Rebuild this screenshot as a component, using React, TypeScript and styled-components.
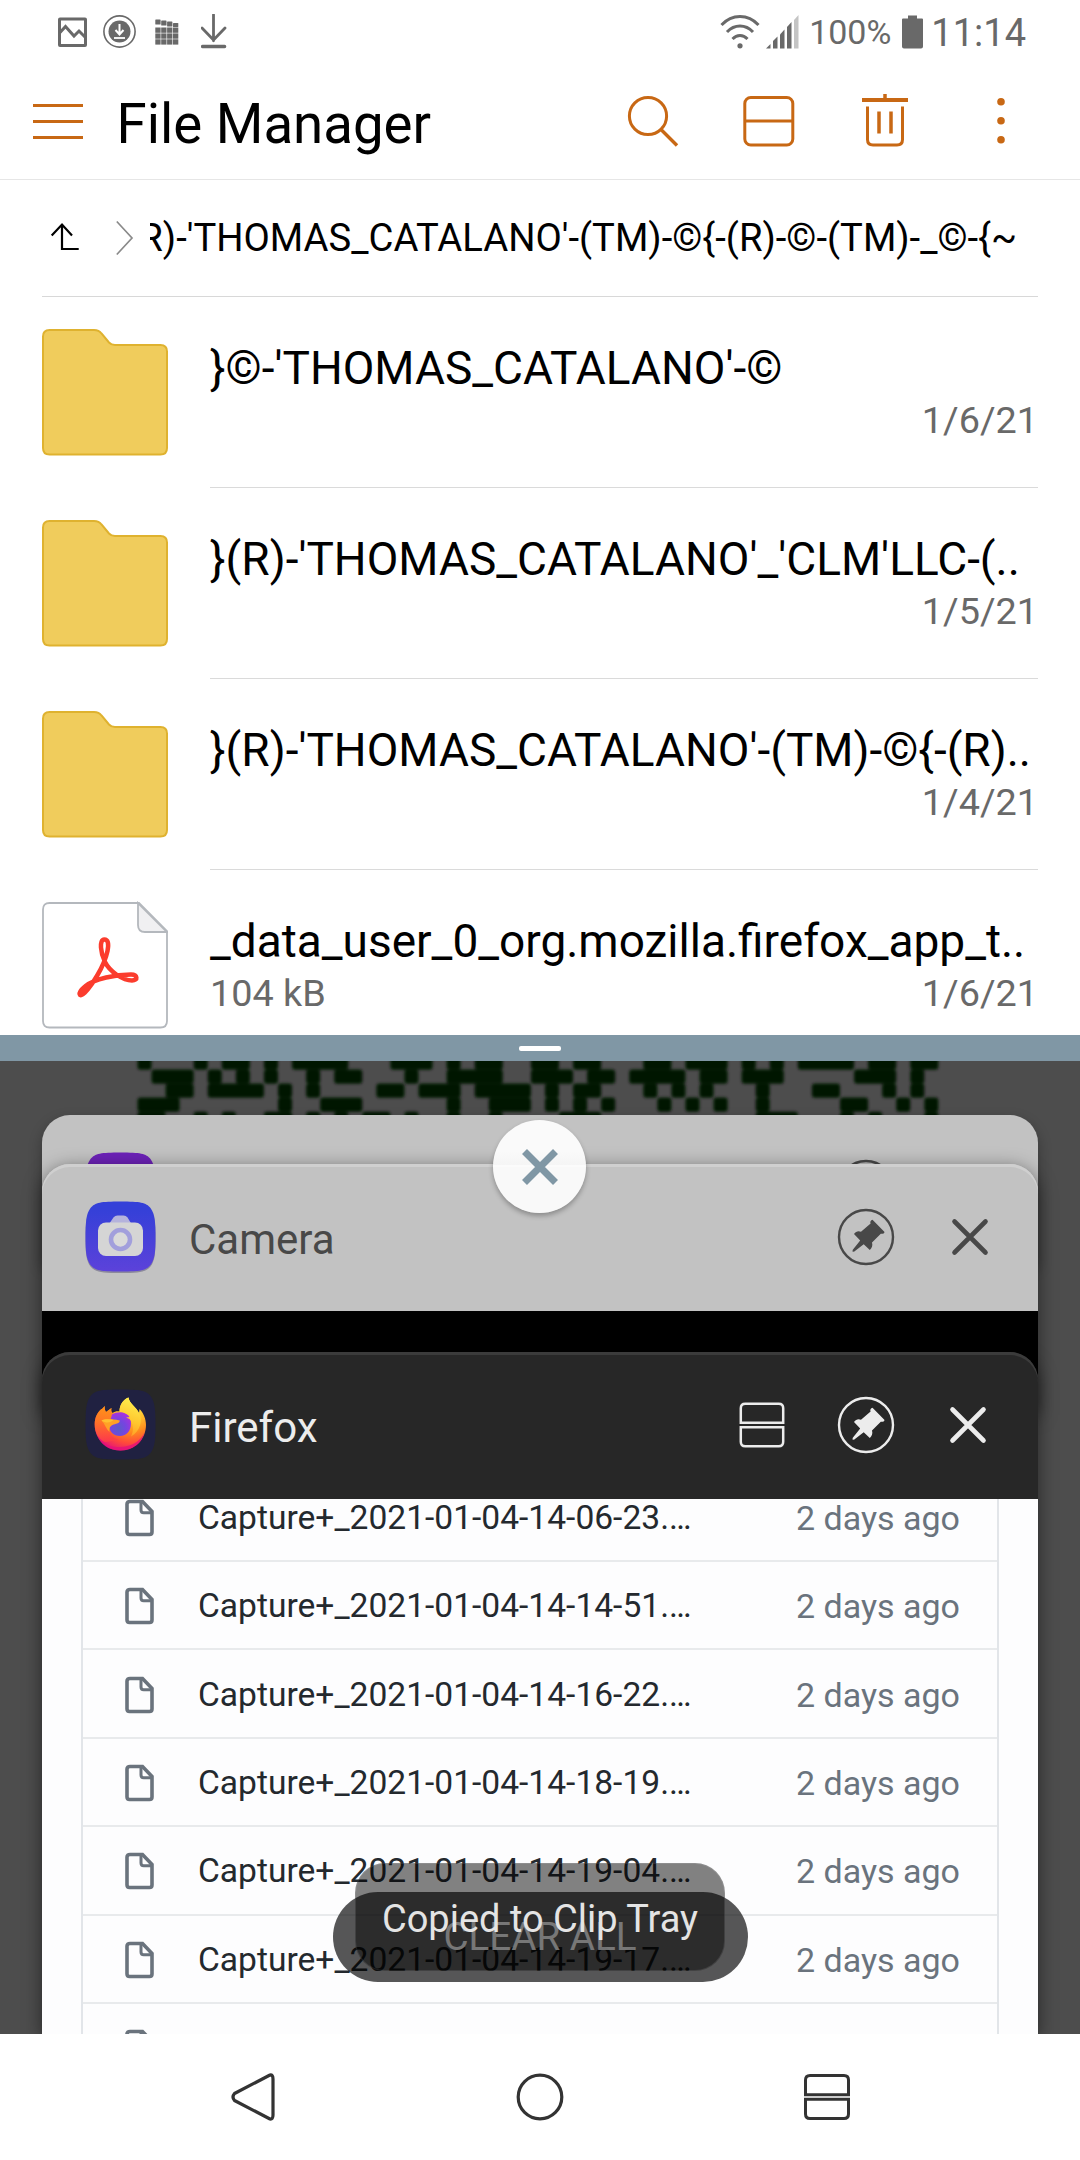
import React from "react";
import styled, { createGlobalStyle } from "styled-components";

const GlobalStyle = createGlobalStyle`
  *, *::before, *::after { box-sizing: border-box; }
  body {
    margin: 0;
    background: #fff;
    font-family: Roboto, "Noto Sans", "Liberation Sans", sans-serif;
  }
  svg { display: block; flex: none; }
`;

const ACCENT = "#c86814";
const GREY = "#696969";
const SLATE = "#8097a5";

/* ---------- layout parts ---------- */

const Screen = styled.div`
  display: flex;
  flex-direction: column;
  width: 1080px;
  height: 2160px;
  overflow: hidden;
  background: #fff;
`;

const UpperPane = styled.section`
  display: flex;
  flex-direction: column;
  height: 1035px;
  flex: none;
  overflow: hidden;
`;

const StatusBar = styled.header`
  display: flex;
  align-items: center;
  justify-content: space-between;
  height: 64px;
  flex: none;
  padding: 0 54px 0 56px;
  color: ${GREY};
`;

const StatusGroup = styled.div<{ $gap: number }>`
  display: flex;
  align-items: center;
  gap: ${(p) => p.$gap}px;
`;

const StatusText = styled.span<{ $size: number; $drop?: number }>`
  font-size: ${(p) => p.$size}px;
  line-height: 40px;
  padding-top: ${(p) => p.$drop ?? 0}px;
  white-space: nowrap;
`;

const Toolbar = styled.nav`
  display: flex;
  align-items: center;
  height: 116px;
  flex: none;
  padding: 0 69px 0 33px;
  border-bottom: 1px solid #e6e6e6;
`;

const Title = styled.h1`
  flex: 1;
  margin: 0;
  padding: 5px 0 0 33.5px;
  font-size: 54.6px;
  font-weight: 400;
  line-height: 64px;
  color: #000;
`;

const ToolbarActions = styled.div`
  display: flex;
  align-items: center;
  gap: 60px;
  margin-right: 78px;
`;

const Breadcrumb = styled.div`
  display: flex;
  align-items: center;
  height: 117px;
  flex: none;
  margin: 0 42px;
  padding-left: 8px;
  border-bottom: 1px solid #d8d8d8;
`;

const CrumbSeparator = styled.div`
  margin: 0 16px 0 36px;
`;

const CrumbPath = styled.div`
  display: flex;
  justify-content: flex-end;
  width: 867px;
  overflow: hidden;
  white-space: nowrap;
  font-size: 38.25px;
  line-height: 50px;
  color: #000;
`;

const FileItem = styled.article`
  display: flex;
  gap: 42px;
  height: 191px;
  flex: none;
  padding: 0 42px;
`;

const FileIconSlot = styled.div`
  width: 126px;
  padding-top: 31px;
`;

const FileInfo = styled.div`
  flex: 1;
  padding-top: 44px;
  border-bottom: 1px solid #dadada;
`;

const FileName = styled.div`
  font-size: 46px;
  line-height: 54px;
  color: #000;
  white-space: nowrap;
`;

const FileMeta = styled.div`
  display: flex;
  justify-content: space-between;
  font-size: 37.8px;
  line-height: 50px;
  color: ${GREY};
`;

const SplitDivider = styled.div`
  display: flex;
  justify-content: center;
  align-items: center;
  height: 26px;
  flex: none;
  background: ${SLATE};
`;

const DividerGrip = styled.div`
  width: 42px;
  height: 5px;
  border-radius: 2px;
  background: #fff;
`;

const LowerPane = styled.section`
  position: relative;
  height: 973px;
  flex: none;
  overflow: hidden;
  background: #4d4d4d;
`;

const Backdrop = styled.div`
  position: absolute;
  inset: 0;
`;

const CardStack = styled.div`
  display: flex;
  flex-direction: column;
  height: 100%;
  padding: 54px 42px 0;
`;

const Card = styled.article<{ $height: number; $overlap: number; $first?: boolean }>`
  position: relative;
  height: ${(p) => p.$height}px;
  flex: none;
  margin-bottom: -${(p) => p.$overlap}px;
  border-radius: 28px 28px 0 0;
  box-shadow: ${(p) =>
    p.$first ? "0 6px 14px rgba(0,0,0,.3)" : "0 4px 18px rgba(0,0,0,.5)"};
`;

const CardHeader = styled.header<{ $dark?: boolean; $edge?: boolean; $right: number }>`
  display: flex;
  align-items: center;
  height: 147px;
  padding: 0 ${(p) => p.$right}px 1px 43px;
  border-radius: 28px 28px 0 0;
  background: ${(p) => (p.$dark ? "#272727" : "#c2c2c2")};
  color: ${(p) => (p.$dark ? "#ececec" : "#484848")};
  box-shadow: ${(p) =>
    p.$edge ? `inset 0 3px 0 ${p.$dark ? "#3b3b3b" : "#cfcfcf"}` : "none"};
`;

const CardTitle = styled.h2`
  flex: 1;
  margin: 0;
  padding: 6px 0 0 33px;
  font-size: 42px;
  font-weight: 400;
  line-height: 50px;
`;

const CardActions = styled.div<{ $gap: number }>`
  display: flex;
  align-items: center;
  gap: ${(p) => p.$gap}px;
`;

const CameraBody = styled.div`
  height: 100px;
  background: #000;
`;

const WebBody = styled.div`
  height: 535px;
  overflow: hidden;
  padding: 0 39px;
  background: #fdfdfe;
`;

const RepoList = styled.div`
  margin-top: -25.4px;
  border: solid #e2e5e9;
  border-width: 0 2px;
`;

const RepoRow = styled.div`
  display: flex;
  align-items: center;
  height: 88.4px;
  padding: 2px 37px 0 42px;
  border-bottom: 2px solid #e8eaec;
  font-size: 34px;
  line-height: 44px;
  white-space: nowrap;
`;

const RepoName = styled.span`
  flex: 1;
  padding-left: 44px;
  font-size: 33.6px;
  color: #24292e;
`;

const RepoAge = styled.span`
  color: #6a737d;
`;

const CloseSplit = styled.button`
  position: absolute;
  left: 493px;
  top: 59px;
  display: flex;
  align-items: center;
  justify-content: center;
  width: 93px;
  height: 93px;
  padding: 0;
  border: 0;
  border-radius: 50%;
  background: linear-gradient(#fafafa 0 34%, #f5f5f5 48%, #fbfbfb 48% 51%, #f9f9f9 51%);
  box-shadow: 0 3px 5px rgba(0, 0, 0, 0.28);
`;

const ClearAll = styled.button`
  position: absolute;
  left: 332.500px;
  top: 831px;
  width: 415px;
  height: 90px;
  padding: 0;
  border: 0;
  border-radius: 45px;
  background: rgba(0, 0, 0, 0.66);
  font-family: inherit;
  font-size: 38.6px;
  line-height: 88px;
  color: rgba(255, 255, 255, 0.88);
`;

const Toast = styled.div`
  position: absolute;
  left: 355px;
  top: 802px;
  width: 370px;
  height: 108px;
  border: 1px solid rgba(255, 255, 255, 0.1);
  border-radius: 30px;
  background: rgba(0, 0, 0, 0.49);
  text-align: center;
  font-size: 38px;
  line-height: 110px;
  color: #e4e4e4;
  white-space: nowrap;
`;

const NavBar = styled.footer`
  display: flex;
  align-items: center;
  justify-content: space-between;
  height: 126px;
  flex: none;
  padding: 0 230px;
  color: #333;
`;

/* ---------- status icons ---------- */

const ImageIcon = () => (
  <svg width="33" height="33" viewBox="0 0 33 33" fill="none" stroke={GREY} strokeWidth="3">
    <rect x="3.5" y="3" width="26" height="26.5" rx="0.5" />
    <path d="M4 16.500l5.500-6 8.500 9.500 5-5 6.500 6.500" />
  </svg>
);

const DownloadBadge = () => (
  <svg width="34" height="34" viewBox="0 0 34 34">
    <circle cx="16.500" cy="16.500" r="15.600" fill="none" stroke={GREY} strokeWidth="1.600" />
    <circle cx="16.500" cy="16.500" r="11" fill={GREY} />
    <path d="M16.500 9v9M12.500 15l4 4.500 4-4.500" fill="none" stroke="#fff" strokeWidth="2" />
    <path d="M11 23h11" stroke="#fff" strokeWidth="1.800" />
  </svg>
);

const GridIcon = () => (
  <svg width="24" height="33" viewBox="0 0 24 33" fill={GREY}>
    {[0, 1, 2, 3].map((c) => (
      <g key={c}>
        <rect x={c * 5.9 + 0.300} y={[3.500, 4.500, 5.500, 7][c]} width="5.300" height={[5, 5, 5, 4][c]} rx="0.600" />
        {[0, 1, 2].map((r) => (
          <rect key={r} x={c * 5.9 + 0.300} y={11.5 + r * 5.900} width="5.300" height="5.300" />
        ))}
      </g>
    ))}
  </svg>
);

const DownloadIcon = () => (
  <svg width="26" height="36" viewBox="0 0 26 36" fill="none" stroke={GREY} strokeLinecap="round">
    <path d="M12.500 0.800v26M1 14L12.500 26l11.500-12" strokeWidth="2.800" />
    <path d="M1.600 32.500h22" strokeWidth="3.400" />
  </svg>
);

const WifiIcon = () => (
  <svg width="40" height="36" viewBox="0 0 40 36" fill="none" stroke={GREY} strokeWidth="3">
    <path d="M1.500 11C12-0.300 28-0.300 38.500 11" />
    <path d="M7 18c7.500-8 18.500-8 26 0" />
    <path d="M12.500 25c4.500-4.700 10.500-4.700 15 0" />
    <circle cx="20" cy="31.800" r="2.600" fill={GREY} stroke="none" />
  </svg>
);

const SignalIcon = () => (
  <svg width="33" height="34" viewBox="0 0 33 34" fill={GREY}>
    <path d="M0 33.500l4.500-4.500v4.500z" />
    <path d="M7 33.500V26l4.500-4.500v12z" />
    <path d="M14 33.500V19.500l4.500-5v19z" />
    <path d="M21 33.500V12l4.500-5v26.500z" />
    <path d="M28 33.500V5l4.500-5v33.500z" fill="#c4c4c4" />
  </svg>
);

const BatteryIcon = () => (
  <svg width="21" height="34" viewBox="0 0 21 34" fill={GREY}>
    <path d="M6 0.500h9v3h5q1 0 1 1v27q0 2-2 2H2q-2 0-2-2v-27q0-1 1-1h5z" />
  </svg>
);

/* ---------- toolbar icons ---------- */

const MenuIcon = () => (
  <svg width="50" height="38" viewBox="0 0 50 38" stroke={ACCENT} strokeWidth="3">
    <path d="M0 2.500h50M0 18.500h50M0 34.500h50" />
  </svg>
);

const SearchIcon = () => (
  <svg width="56" height="56" viewBox="0 0 56 56" fill="none" stroke={ACCENT} strokeWidth="3">
    <circle cx="23" cy="22" r="18.600" />
    <path d="M36 35.500l16 16" strokeWidth="3.400" />
  </svg>
);

const SplitIcon = () => (
  <svg width="56" height="56" viewBox="0 0 56 56" fill="none" stroke={ACCENT} strokeWidth="3">
    <rect x="3.800" y="3.500" width="48" height="47.500" rx="6" />
    <path d="M3.800 27h48" />
  </svg>
);

const TrashIcon = () => (
  <svg width="56" height="56" viewBox="0 0 56 56" fill="none" stroke={ACCENT}>
    <path d="M5 6h46" strokeWidth="4" />
    <path d="M28 0v6" strokeWidth="3.500" />
    <path d="M10.500 12.500V45.500q0 5.500 5.500 5.500h24q5.500 0 5.500-5.500V12.500" strokeWidth="3" />
    <path d="M22 17.500v22M34 17.500v22" strokeWidth="3.500" />
  </svg>
);

const MoreIcon = () => (
  <svg width="20" height="56" viewBox="0 0 20 56" fill={ACCENT}>
    <circle cx="10" cy="7.800" r="3.800" />
    <circle cx="10" cy="26.800" r="3.800" />
    <circle cx="10" cy="45.800" r="3.800" />
  </svg>
);

const UpLevelIcon = () => (
  <svg width="30" height="34" viewBox="0 0 30 34" fill="none" stroke="#000" strokeWidth="2.200">
    <path d="M12 3v25h16.700M1.700 14.500L12 3.500l10 11" />
  </svg>
);

const ChevronIcon = () => (
  <svg width="18" height="36" viewBox="0 0 18 36" fill="none" stroke="#8a8a8a" strokeWidth="1.700">
    <path d="M0.800 1.500L16 18 0.800 34.500" />
  </svg>
);

/* ---------- file icons ---------- */

const FolderIcon = () => (
  <svg width="126" height="128" viewBox="0 0 126 128">
    <path
      d="M7.500 2H52Q57 2 59.500 5.500L67 14.500Q69.300 17 73 17H118.500Q125 17 125 23.500V120Q125 126.500 118.500 126.500H7.500Q1 126.500 1 120V8.500Q1 2 7.500 2Z"
      fill="#f0cc5c"
      stroke="#dfb22f"
      strokeWidth="2"
    />
  </svg>
);

const PdfIcon = () => (
  <svg width="126" height="128" viewBox="0 0 126 128" fill="none">
    <path
      d="M7.500 2H97L125 30V120Q125 126.500 118.500 126.500H7.500Q1 126.500 1 120V8.500Q1 2 7.500 2Z"
      fill="#fff"
      stroke="#b4b8bd"
      strokeWidth="1.800"
    />
    <path d="M96 2V24Q96 31 103 31H125Z" fill="#f0f0f2" stroke="#b4b8bd" strokeWidth="1.800" />
    <path
      d="M62.300 38.500C57 38.500 58.500 52 63 61C68 71 81 79.500 90 79.500C96.500 79.500 95.500 73.500 89 73.500C75 73.500 52 77.500 43 85.500C34.500 92.500 37.500 97 42.500 92C50 84 62 66 65.500 50C67 42.500 66 38.500 62.300 38.500Z"
      stroke="#fb3c2d"
      strokeWidth="4.500"
      strokeLinejoin="round"
    />
  </svg>
);

/* ---------- recents icons ---------- */

const SQUIRCLE =
  "M35.500 0.500C55 0.500 61 1.500 65.500 7C70 13 70.500 22 70.500 35.500C70.500 50 70 58 65.500 64C61 69.500 55 70.500 35.500 70.500C16 70.500 10 69.500 5.500 64C1 58 0.500 50 0.500 35.500C0.500 22 1 13 5.500 7C10 1.500 16 0.500 35.500 0.500Z";

const PurpleAppIcon = () => (
  <svg width="71" height="72" viewBox="0 0 71 72">
    <path d={SQUIRCLE} fill="#6d22b8" />
  </svg>
);

const CameraIcon = () => (
  <svg width="71" height="72" viewBox="0 0 71 72">
    <defs>
      <linearGradient id="cam" x1="0" y1="0" x2="0" y2="1">
        <stop offset="0.100" stopColor="#3440d8" />
        <stop offset="1" stopColor="#5c42da" />
      </linearGradient>
    </defs>
    <path d={SQUIRCLE} transform="translate(0 1.500)" fill="#8c8a9c" />
    <path d={SQUIRCLE} fill="url(#cam)" />
    <path d="M24 23L28.500 16.500Q30 14.500 32.500 14.500H38.500Q41 14.500 42.500 16.500L46.500 23Z" fill="#b5b3dc" />
    <rect x="13" y="21.500" width="45" height="33.500" rx="8" fill="#d5d5d5" />
    <circle cx="35.500" cy="38.500" r="9.500" fill="#dadada" stroke="#a29fdc" strokeWidth="4.600" />
  </svg>
);

const FirefoxIcon = () => (
  <svg width="71" height="72" viewBox="0 0 71 72">
    <defs>
      <radialGradient id="ffBody" cx="0.720" cy="0.120" r="0.950">
        <stop offset="0.050" stopColor="#fff04f" />
        <stop offset="0.320" stopColor="#ffc22e" />
        <stop offset="0.560" stopColor="#ff8a1e" />
        <stop offset="0.780" stopColor="#ff4a3a" />
        <stop offset="1" stopColor="#e4107c" />
      </radialGradient>
      <radialGradient id="ffGlobe" cx="0.420" cy="0.700" r="0.700">
        <stop offset="0" stopColor="#5a5cc8" />
        <stop offset="0.500" stopColor="#7545e0" />
        <stop offset="1" stopColor="#a832dd" />
      </radialGradient>
      <linearGradient id="ffHead" x1="0" y1="0" x2="0.200" y2="1">
        <stop offset="0" stopColor="#ff9a16" />
        <stop offset="0.450" stopColor="#ff7a24" />
        <stop offset="1" stopColor="#ff3f46" />
      </linearGradient>
      <linearGradient id="ffTail" x1="0.600" y1="0" x2="0.400" y2="1">
        <stop offset="0" stopColor="#fff04f" />
        <stop offset="0.600" stopColor="#ffc62e" />
        <stop offset="1" stopColor="#ff9a26" />
      </linearGradient>
    </defs>
    <path d={SQUIRCLE} fill="#202141" />
    <path
      d="M19.700 17C19.600 20 20 21.500 21 23L26.500 19C26 21 26.200 23 27.500 24C30 22.500 32 22 34.500 22.600C34.500 15.500 38.500 10.500 43.500 8.600C44.500 15 51 18 54 24L54.500 20C58.500 24 61 30 61 36C61 50 50 61.500 35.500 61.500C21 61.500 9.700 50 9.700 35.500C9.700 28 13 22 17.500 19.500Z"
      fill="url(#ffBody)"
    />
    <path d="M12.500 47C18 55.500 27 58.500 36 58C48 57.500 56 51 59.500 44C57 54 48 61.500 35.500 61.500C24 61.500 15.500 55.500 12.500 47Z" fill="#e5107a" opacity="0.800" />
    <path
      d="M19.700 17C19.600 20 20 21.500 21 23L26.500 19C26 21 26.200 23 27.500 24L30 29L24 36C23 44 27 49 34 51L20 53C13 50 9.700 43 9.700 35.500C9.700 28 13 22 17.500 19.500Z"
      fill="url(#ffHead)"
      opacity="0.850"
    />
    <path d="M27 25.500C30 23.300 35 22.600 39 23.600C43.500 25 46 29 46 34.500C46 42 41.500 47 35 47C28.500 47 24 42.500 24 36Z" fill="url(#ffGlobe)" />
    <path
      d="M34.500 22.800C34.500 15.500 38.500 10.500 43.500 8.600C44.500 15 51 18 54 24C58 31 55.500 42 46 47.500C49 42 48.500 34 44.500 30L41 28.500L45.500 28C42.500 25 38.500 23.300 34.500 22.800Z"
      fill="url(#ffTail)"
    />
    <path d="M16.500 31.500C20 29.500 26 29.500 34.800 31.500C34.500 35 30.500 34.500 27.500 36C25 37.500 24 39 24.500 43C21 40 20 35 16.500 31.500Z" fill="#ffa126" />
    <path d="M16.500 31.500C20 29.500 24 30 28.500 31C25.500 34 21 34.500 16.500 31.500Z" fill="#ffbf30" />
  </svg>
);

const PinIcon = () => (
  <svg width="58" height="58" viewBox="-29 -29 58 58">
    <circle r="27" fill="none" stroke="currentColor" strokeWidth="2.400" />
    <path
      d="M6.500-17.200L18.300-5.200Q18.800-4 17.600-3.500Q16-3 14.800-3.200L6 5.500C7 8.500 5.700 11.500 3.800 13L-2.300 7.200L-12 14.800L-13.600 14.600L-13.200 12.800L-5.800 3.500L-12-3C-10-5.800-7.500-6.300-5-5.200L4.600-13.500C3.700-15 4.800-16.700 6.500-17.200Z"
      fill="currentColor"
    />
  </svg>
);

const CloseIcon = () => (
  <svg width="40" height="40" viewBox="0 0 40 40" stroke="currentColor" strokeWidth="4.600" strokeLinecap="round">
    <path d="M4.500 4.500l31 31M35.500 4.500l-31 31" />
  </svg>
);

const SplitWindowIcon = ({ weight = 2.5, inset = 1.8 }: { weight?: number; inset?: number }) => {
  const a = inset;
  const b = 46 - inset;
  return (
    <svg width="46" height="46" viewBox="0 0 46 46" fill="none" stroke="currentColor" strokeWidth={weight}>
      <path d={`M${a} 20.800V${a + 4.5}Q${a} ${a} ${a + 4.5} ${a}H${b - 4.5}Q${b} ${a} ${b} ${a + 4.5}V20.800Z`} />
      <path d={`M${a} 25.200V${b - 4.5}Q${a} ${b} ${a + 4.5} ${b}H${b - 4.5}Q${b} ${b} ${b} ${b - 4.5}V25.200Z`} />
    </svg>
  );
};

const DocIcon = () => (
  <svg width="29" height="38" viewBox="0 0 29 38" fill="none" stroke="#6a737d" strokeWidth="3.600">
    <path d="M5 2.500H17.500L27 12.500V33Q27 35.500 24.500 35.500H4.500Q2 35.500 2 33V5Q2 2.500 5 2.500Z" />
    <path d="M16 3V11Q16 13.700 18.700 13.700H27" strokeWidth="3" />
  </svg>
);

/* ---------- dimmed barcode behind the cards ---------- */

const MODULE = 14.05;
const CODE_ROWS: Array<Array<[number, number]>> = [
  [[0, 0], [4, 4], [6, 7], [9, 9], [11, 14], [18, 20], [22, 22], [24, 25], [28, 29], [31, 32], [36, 37], [39, 41], [43, 43], [45, 45], [47, 50], [52, 53], [55, 56]],
  [[1, 3], [5, 5], [7, 7], [9, 9], [12, 12], [14, 15], [19, 19], [22, 25], [28, 30], [32, 33], [35, 38], [40, 41], [43, 45], [51, 53], [55, 55]],
  [[2, 3], [5, 8], [10, 10], [12, 12], [17, 18], [20, 22], [24, 27], [29, 29], [31, 32], [36, 36], [38, 38], [40, 40], [44, 44], [48, 49], [53, 53], [55, 55]],
  [[0, 2], [10, 10], [13, 15], [22, 22], [25, 27], [29, 29], [31, 31], [33, 33], [37, 37], [39, 39], [41, 41], [44, 44], [50, 51], [54, 54], [56, 56]],
  [[0, 1], [4, 4], [6, 6], [9, 10], [12, 12], [14, 14], [16, 17], [19, 19], [22, 22], [25, 25], [30, 32], [44, 46], [50, 50], [52, 52], [56, 56]],
];

const Barcode = () => (
  <svg width="1080" height="120" viewBox="0 0 1080 120">
    <defs>
      <filter id="soft" x="-5%" y="-20%" width="110%" height="140%">
        <feGaussianBlur stdDeviation="1.700" />
      </filter>
    </defs>
    <g fill="#021305" filter="url(#soft)">
      {CODE_ROWS.map((runs, r) =>
        runs.map(([from, to]) => (
          <rect
            key={`${r}-${from}`}
            x={137.500 + from * MODULE}
            y={8.500 + (r - 1) * MODULE}
            width={(to - from + 1) * MODULE}
            height={MODULE + 0.200}
            rx="3"
          />
        ))
      )}
    </g>
  </svg>
);

/* ---------- data ---------- */

type Entry = { kind: "folder" | "pdf"; name: string; size?: string; date: string };

const FILES: Entry[] = [
  { kind: "folder", name: "}©-'THOMAS_CATALANO'-©", date: "1/6/21" },
  { kind: "folder", name: "}(R)-'THOMAS_CATALANO'_'CLM'LLC-(..", date: "1/5/21" },
  { kind: "folder", name: "}(R)-'THOMAS_CATALANO'-(TM)-©{-(R)..", date: "1/4/21" },
  { kind: "pdf", name: "_data_user_0_org.mozilla.firefox_app_t..", size: "104 kB", date: "1/6/21" },
];

const CAPTURES = ["14-06-23", "14-14-51", "14-16-22", "14-18-19", "14-19-04", "14-19-17"];

export default function App() {
  return (
    <>
      <GlobalStyle />
      <Screen>
        <UpperPane>
          <StatusBar>
            <StatusGroup $gap={22}>
              <StatusGroup $gap={18}>
                <StatusGroup $gap={14}>
                  <ImageIcon />
                  <DownloadBadge />
                </StatusGroup>
                <GridIcon />
              </StatusGroup>
              <DownloadIcon />
            </StatusGroup>
            <StatusGroup $gap={8}>
              <StatusGroup $gap={11}>
                <StatusGroup $gap={10}>
                  <StatusGroup $gap={6}>
                    <WifiIcon />
                    <SignalIcon />
                  </StatusGroup>
                  <StatusText $size={34}>100%</StatusText>
                </StatusGroup>
                <BatteryIcon />
              </StatusGroup>
              <StatusText $size={38} $drop={2}>11:14</StatusText>
            </StatusGroup>
          </StatusBar>

          <Toolbar>
            <MenuIcon />
            <Title>File Manager</Title>
            <ToolbarActions>
              <SearchIcon />
              <SplitIcon />
              <TrashIcon />
            </ToolbarActions>
            <MoreIcon />
          </Toolbar>

          <Breadcrumb>
            <UpLevelIcon />
            <CrumbSeparator>
              <ChevronIcon />
            </CrumbSeparator>
            <CrumbPath>
              <span>{"}(R)-'THOMAS_CATALANO'-(TM)-©{-(R)-©-(TM)-_©-{~"}</span>
            </CrumbPath>
          </Breadcrumb>

          {FILES.map((f) => (
            <FileItem key={f.name}>
              <FileIconSlot>{f.kind === "folder" ? <FolderIcon /> : <PdfIcon />}</FileIconSlot>
              <FileInfo>
                <FileName>{f.name}</FileName>
                <FileMeta>
                  <span>{f.size}</span>
                  <span>{f.date}</span>
                </FileMeta>
              </FileInfo>
            </FileItem>
          ))}
        </UpperPane>

        <SplitDivider>
          <DividerGrip />
        </SplitDivider>

        <LowerPane>
          <Backdrop>
            <Barcode />
          </Backdrop>
          <CardStack>
            <Card $height={147} $overlap={98} $first>
              <CardHeader $right={48}>
                <PurpleAppIcon />
                <CardTitle />
                <CardActions $gap={55}>
                  <PinIcon />
                  <CloseIcon />
                </CardActions>
              </CardHeader>
            </Card>
            <Card $height={247} $overlap={59}>
              <CardHeader $right={48} $edge>
                <CameraIcon />
                <CardTitle>Camera</CardTitle>
                <CardActions $gap={55}>
                  <PinIcon />
                  <CloseIcon />
                </CardActions>
              </CardHeader>
              <CameraBody />
            </Card>
            <Card $height={682} $overlap={0}>
              <CardHeader $right={50} $dark $edge>
                <FirefoxIcon />
                <CardTitle>Firefox</CardTitle>
                <CardActions $gap={53}>
                  <CardActions $gap={52}>
                    <SplitWindowIcon />
                    <PinIcon />
                  </CardActions>
                  <CloseIcon />
                </CardActions>
              </CardHeader>
              <WebBody>
                <RepoList>
                  {CAPTURES.map((t) => (
                    <RepoRow key={t}>
                      <DocIcon />
                      <RepoName>{`Capture+_2021-01-04-${t}.…`}</RepoName>
                      <RepoAge>2 days ago</RepoAge>
                    </RepoRow>
                  ))}
                  <RepoRow>
                    <DocIcon />
                  </RepoRow>
                </RepoList>
              </WebBody>
            </Card>
          </CardStack>
          <CloseSplit aria-label="Close">
            <svg width="38" height="38" viewBox="0 0 38 38" stroke={SLATE} strokeWidth="7">
              <path d="M3.500 3.500l31 31M34.500 3.500l-31 31" />
            </svg>
          </CloseSplit>
          <ClearAll>CLEAR ALL</ClearAll>
          <Toast>Copied to Clip Tray</Toast>
        </LowerPane>

        <NavBar>
          <svg width="48" height="50" viewBox="0 0 48 50" fill="none" stroke="currentColor" strokeWidth="3.200" strokeLinejoin="round">
            <path d="M40 3L4.500 21.500Q1.500 25 4.500 28.500L40 47Q43 47.500 43 43V7Q43 2.500 40 3Z" />
          </svg>
          <svg width="50" height="50" viewBox="0 0 50 50" fill="none" stroke="currentColor" strokeWidth="3.200">
            <circle cx="24" cy="25" r="21.800" />
          </svg>
          <SplitWindowIcon weight={3} inset={1.5} />
        </NavBar>
      </Screen>
    </>
  );
}
